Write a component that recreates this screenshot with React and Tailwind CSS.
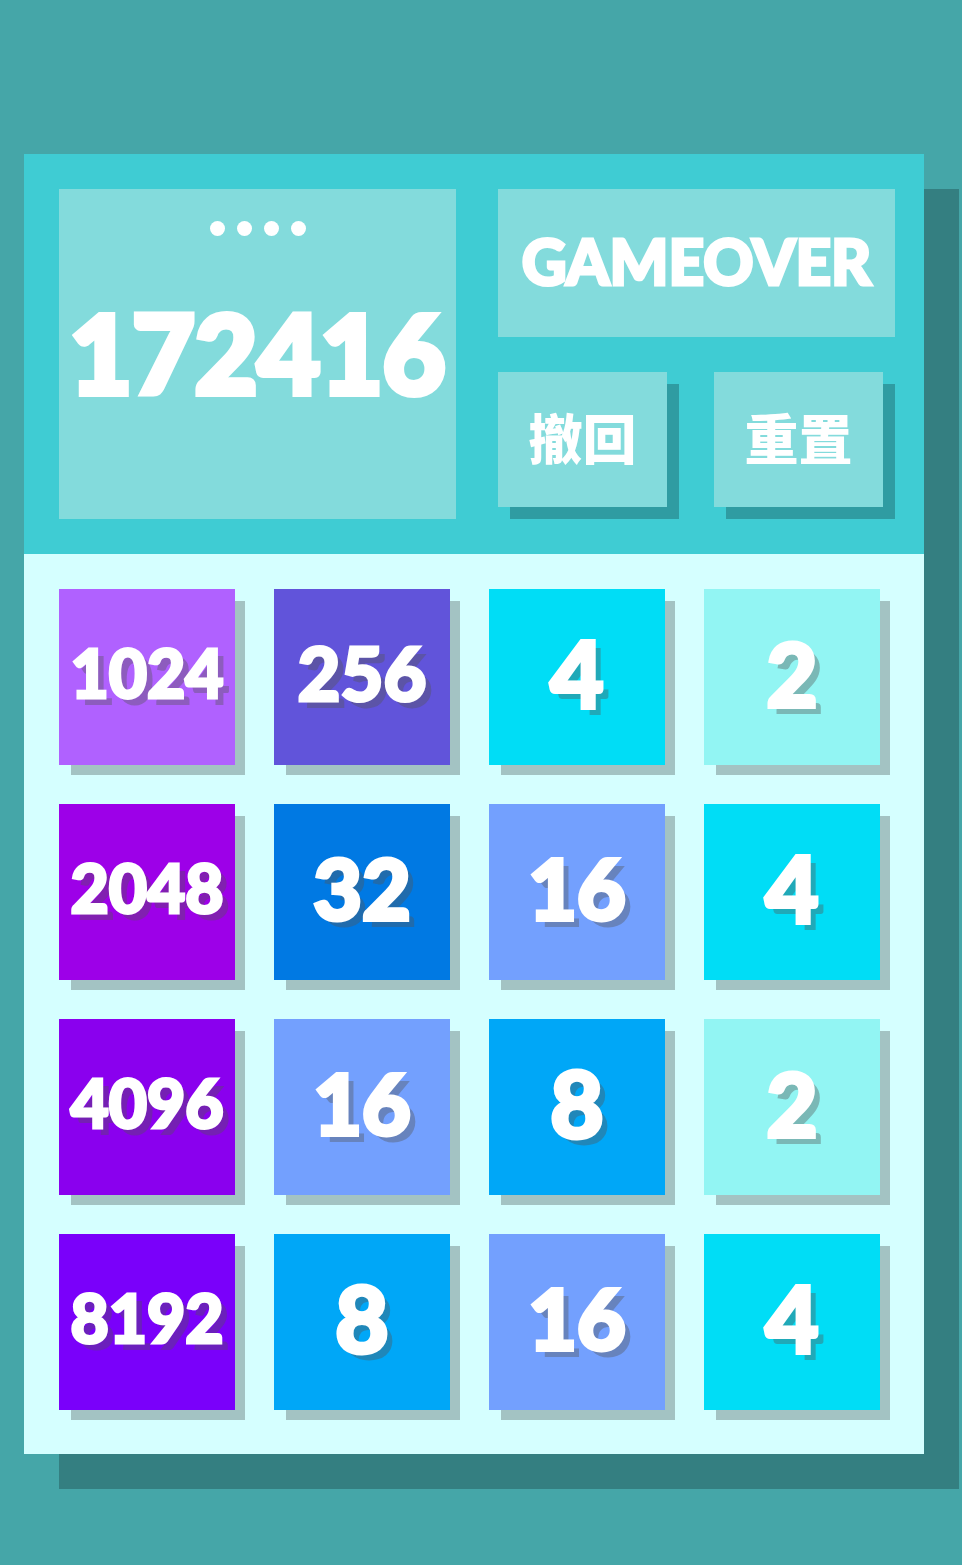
const tileStyles = {
  2: "bg-[#92f5f3] text-[88px] [-webkit-text-stroke:4px_white]",
  4: "bg-[#00ddf6] text-[92px] [-webkit-text-stroke:4px_white]",
  8: "bg-[#00a7f7] text-[92px] [-webkit-text-stroke:4px_white]",
  16: "bg-[#73a0fe] text-[84px] [-webkit-text-stroke:4px_white]",
  32: "bg-[#0079e3] text-[84px] [-webkit-text-stroke:4px_white]",
  256: "bg-[#6154da] text-[74px] [-webkit-text-stroke:3px_white]",
  1024: "bg-[#b061ff] text-[66px] [-webkit-text-stroke:3px_white]",
  2048: "bg-[#9d00e8] text-[66px] [-webkit-text-stroke:3px_white]",
  4096: "bg-[#8a00ee] text-[66px] [-webkit-text-stroke:3px_white]",
  8192: "bg-[#7a00fa] text-[66px] [-webkit-text-stroke:3px_white]",
};

const board = [
  [1024, 256, 4, 2],
  [2048, 32, 16, 4],
  [4096, 16, 8, 2],
  [8192, 8, 16, 4],
];

function Tile({ value }) {
  return (
    <div
      className={`flex aspect-square items-center justify-center pb-2 leading-none text-white shadow-[11px_11px_0_-1px_#a3c3c3] [text-shadow:7px_7px_0_rgba(85,85,85,0.38)] ${tileStyles[value]}`}
    >
      {value}
    </div>
  );
}

function ActionButton({ children }) {
  return (
    <button
      type="button"
      className="h-[135px] flex-1 bg-[#83dbdc] text-[54px] font-black text-white shadow-[12px_12px_0_#2f9ca2]"
    >
      {children}
    </button>
  );
}

export default function App() {
  return (
    <div className="min-h-screen bg-[#45a6a8] pt-[154px] pr-[38px] pb-[111px] pl-6 font-['Lato','Noto_Sans_CJK_SC',sans-serif] font-black">
      <main className="shadow-[35px_35px_0_#347f81]">
        <header className="grid grid-cols-2 gap-[42px] bg-[#3fccd3] py-[35px] pr-[29px] pl-[35px]">
          <section className="flex h-[330px] flex-col items-center bg-[#83dbdc] text-white">
            <div className="mt-8 flex gap-3">
              {[0, 1, 2, 3].map((dot) => (
                <span key={dot} className="size-[15px] rounded-full bg-white" />
              ))}
            </div>
            <p className="mt-14 text-[108px] leading-[120px] [-webkit-text-stroke:6px_white]">172416</p>
          </section>
          <div className="flex flex-col justify-between pb-3">
            <h1 className="flex h-[148px] items-center justify-center bg-[#83dbdc] pb-1 text-[62px] leading-none text-white [-webkit-text-stroke:3px_white]">
              GAMEOVER
            </h1>
            <div className="flex gap-[47px] pr-3">
              <ActionButton>撤回</ActionButton>
              <ActionButton>重置</ActionButton>
            </div>
          </div>
        </header>
        <section className="grid grid-cols-4 gap-[39px] bg-[#d5ffff] pt-[35px] pr-11 pb-11 pl-[35px]">
          {board.flat().map((value, index) => (
            <Tile key={index} value={value} />
          ))}
        </section>
      </main>
    </div>
  );
}
